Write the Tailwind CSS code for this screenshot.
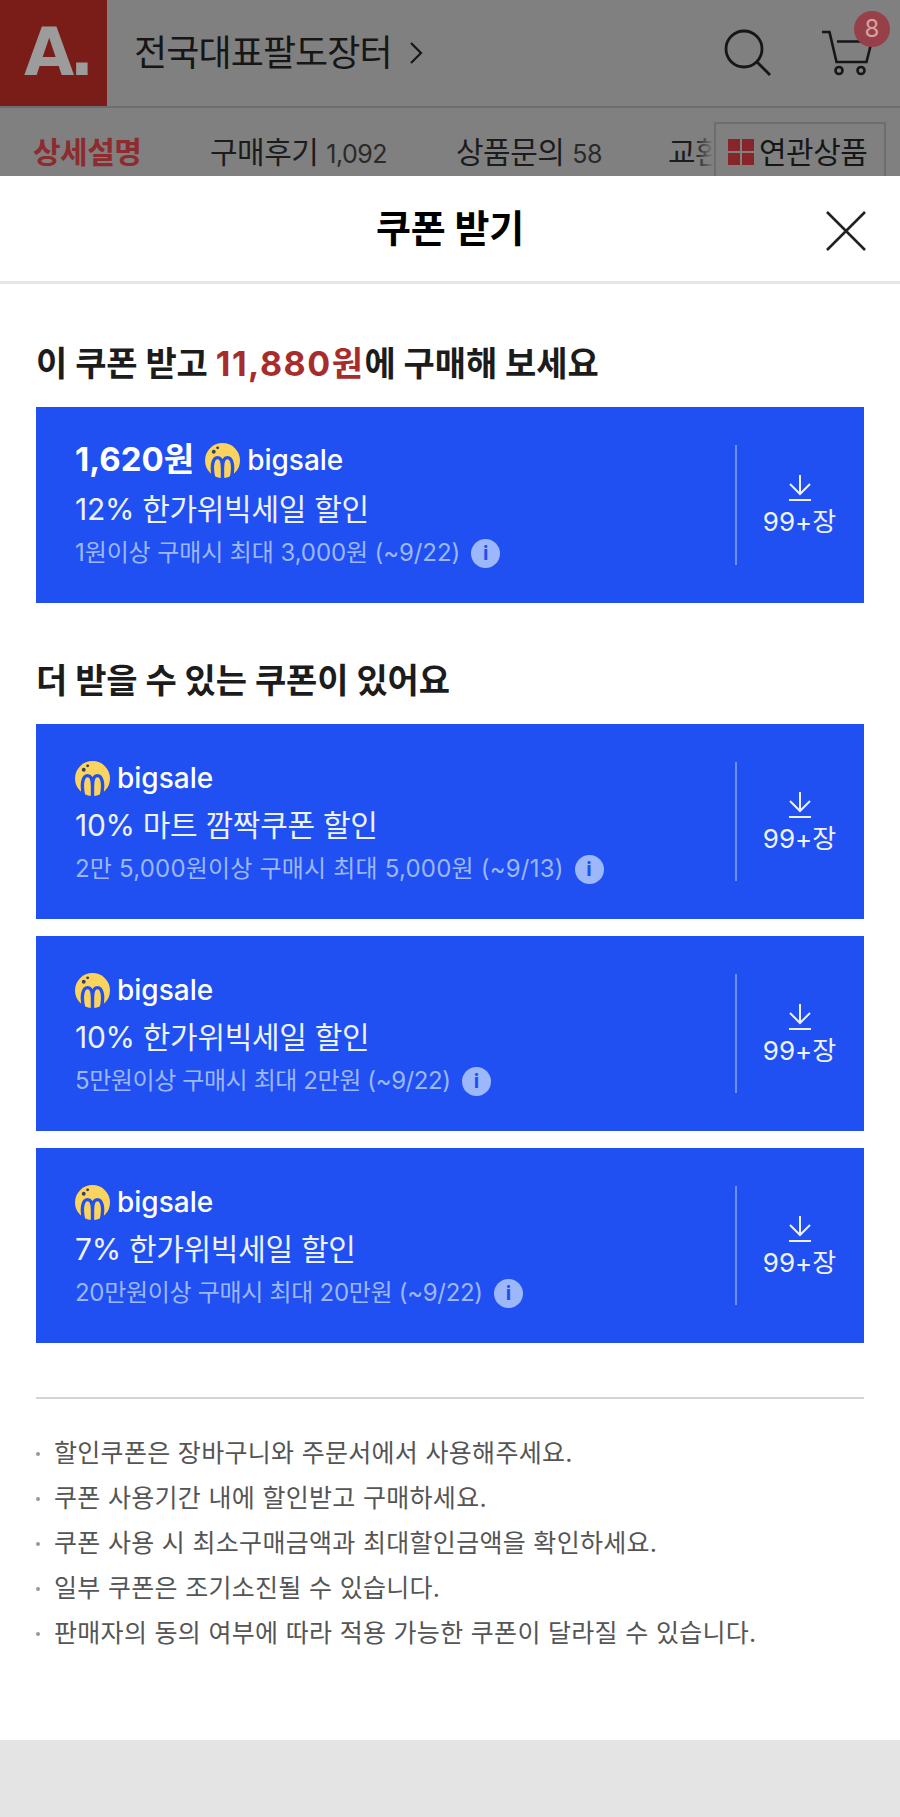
<!DOCTYPE html>
<html lang="ko">
<head>
<meta charset="UTF-8" />
<meta name="viewport" content="width=device-width, initial-scale=1.0" />
<title>쿠폰 받기</title>
<script src="https://cdn.jsdelivr.net/npm/@tailwindcss/browser@4"></script>
</head>
<body class="font-['Inter','Noto_Sans_CJK_KR',sans-serif] bg-white">
<div class="w-[900px] h-[1817px] overflow-hidden flex flex-col">

  <!-- dimmed page behind the sheet -->
  <header class="h-[108px] bg-[#808080] border-b-2 border-[#6e6e6e] flex items-center shrink-0">
    <div class="w-[107px] h-[106px] bg-[#7a1d18] flex items-center justify-center text-[#9c9c9c] font-['DejaVu_Sans'] font-bold text-[65px] tracking-[-6px] pl-[5px]">A.</div>
    <div class="ml-[27px] flex items-center gap-[17px] text-[36px] text-[#161616] tracking-[-0.9px]">
      전국대표팔도장터
      <svg class="w-[14px] h-[24px]" viewBox="0 0 14 24" fill="none" stroke="#161616" stroke-width="2.2"><path d="M2 2l10 10L2 22" /></svg>
    </div>
    <svg class="ml-auto w-[48px] h-[48px]" viewBox="0 0 48 48" fill="none" stroke="#161616" stroke-width="2.8"><circle cx="20" cy="20" r="18" /><path d="M33 33l13 13" /></svg>
    <div class="relative w-[50px] h-[46px] ml-[50px] mr-[28px]">
      <svg class="w-[50px] h-[46px]" viewBox="0 0 50 46" fill="none" stroke="#161616" stroke-width="2.6"><path d="M0 2h7.5l7 30h30l5-20M15 11.5h30" /><circle cx="17" cy="40.5" r="3.5" /><circle cx="39" cy="40.5" r="3.5" /></svg>
      <span class="absolute -top-[19px] left-[32px] w-[36px] h-[36px] rounded-full bg-[#97404a] text-[#d8a0a0] text-[24px] flex items-center justify-center">8</span>
    </div>
  </header>

  <nav class="relative h-[68px] bg-[#808080] shrink-0 overflow-hidden flex items-center pl-[33px] pt-[20px] text-[#1c1c1c] text-[30px] tracking-[-0.5px]">
    <span class="w-[177px] font-bold text-[#8d2b2e]">상세설명</span>
    <span class="w-[246px]">구매후기 <span class="text-[25px] text-[#2a2a2a]">1,092</span></span>
    <span class="w-[212px]">상품문의 <span class="text-[25px] text-[#2a2a2a]">58</span></span>
    <span>교환</span>
    <div class="absolute right-[186px] top-0 w-[20px] h-full bg-linear-to-r from-[#808080]/0 to-[#808080]"></div>
    <div class="absolute right-[14px] top-[14px] w-[172px] h-[60px] bg-[#808080] border-2 border-[#6e6e6e] flex items-center pl-[12px] gap-[5px] text-[#161616] text-[30px] tracking-[-0.5px]">
      <span class="grid grid-cols-2 gap-[2px] w-[26px] h-[26px] shrink-0">
        <i class="bg-[#86252a]"></i><i class="bg-[#86252a]"></i><i class="bg-[#86252a]"></i><i class="bg-[#86252a]"></i>
      </span>
      연관상품
    </div>
  </nav>

  <!-- coupon sheet -->
  <main class="flex-1 bg-white flex flex-col">
    <div class="relative h-[108px] border-b-[3px] border-[#e6e6e6] flex items-center justify-center shrink-0">
      <h1 class="text-[38px] font-bold text-black tracking-[-0.2px]">쿠폰 받기</h1>
      <svg class="absolute right-[34px] top-[35px] w-[40px] h-[40px]" viewBox="0 0 40 40" fill="none" stroke="#222222" stroke-width="2.6"><path d="M1 1l38 38M39 1L1 39" /></svg>
    </div>

    <section class="px-[36px]">
      <h2 class="mt-[60px] h-[40px] leading-[40px] text-[34px] font-bold text-[#1c1c1c] tracking-[-0.1px]">이 쿠폰 받고 <span class="text-[#a92c2c] tracking-[1.5px]">11,880원</span>에 구매해 보세요</h2>

      <article class="mt-[23px] h-[196px] bg-[#2050f2] flex text-white">
        <div class="flex-1 pl-[39px] pt-[32px]">
          <div class="flex items-center h-[42px]">
            <span class="text-[33px] font-bold mr-[11px]">1,620원</span>
            <svg class="w-[35px] h-[35px]" viewBox="0 0 36 36"><circle cx="18" cy="18" r="18" fill="#fbd35f" /><path d="M9 36C6 24 8 15 13 15c4 0 5 5 5 11 0-6 1-11 5-11 5 0 7 9 4 21M18 26v10" fill="none" stroke="#2050f2" stroke-width="3.5" /><circle cx="13" cy="5" r="1.5" fill="#3a3a5a" /><circle cx="9" cy="9" r="2" fill="#3a3a5a" /></svg>
            <span class="ml-[7px] text-[28px] font-medium">bigsale</span>
          </div>
          <p class="mt-[8px] h-[40px] leading-[40px] text-[30px] text-[#eef2ff] tracking-[-0.3px]">12% 한가위빅세일 할인</p>
          <p class="mt-[6px] flex items-center text-[24px] text-[#9db7fb] tracking-[-0.1px]">1원이상 구매시 최대 3,000원 (~9/22)<span class="ml-[11px] w-[29px] h-[29px] rounded-full bg-[#9db7fb] text-[#2050f2] text-[20px] font-bold flex items-center justify-center">i</span></p>
        </div>
        <div class="w-[129px] my-[38px] pt-[6px] pr-[2px] border-l-2 border-[#6b8ff8] flex flex-col items-center justify-center">
          <svg class="w-[24px] h-[26px]" viewBox="0 0 24 26" fill="none" stroke="#eef2ff" stroke-width="2"><path d="M12 0v19M2 9l10 10L22 9M1 25h22" /></svg>
          <span class="mt-[1px] text-[26px] text-[#eef2ff]">99+장</span>
        </div>
      </article>

      <h2 class="mt-[58px] h-[40px] leading-[40px] text-[34px] font-bold text-[#1c1c1c] tracking-[-0.1px]">더 받을 수 있는 쿠폰이 있어요</h2>

      <article class="mt-[23px] h-[195px] bg-[#2050f2] flex text-white">
        <div class="flex-1 pl-[39px] pt-[34px]">
          <div class="flex items-center h-[40px]">
            <svg class="w-[35px] h-[35px]" viewBox="0 0 36 36"><circle cx="18" cy="18" r="18" fill="#fbd35f" /><path d="M9 36C6 24 8 15 13 15c4 0 5 5 5 11 0-6 1-11 5-11 5 0 7 9 4 21M18 26v10" fill="none" stroke="#2050f2" stroke-width="3.5" /><circle cx="13" cy="5" r="1.5" fill="#3a3a5a" /><circle cx="9" cy="9" r="2" fill="#3a3a5a" /></svg>
            <span class="ml-[7px] text-[28px] font-medium">bigsale</span>
          </div>
          <p class="mt-[7px] h-[40px] leading-[40px] text-[30px] text-[#eef2ff] tracking-[-0.3px]">10% 마트 깜짝쿠폰 할인</p>
          <p class="mt-[6px] flex items-center text-[24px] text-[#9db7fb] tracking-[0.2px]">2만 5,000원이상 구매시 최대 5,000원 (~9/13)<span class="ml-[11px] w-[29px] h-[29px] rounded-full bg-[#9db7fb] text-[#2050f2] text-[20px] font-bold flex items-center justify-center">i</span></p>
        </div>
        <div class="w-[129px] my-[38px] pt-[6px] pr-[2px] border-l-2 border-[#6b8ff8] flex flex-col items-center justify-center">
          <svg class="w-[24px] h-[26px]" viewBox="0 0 24 26" fill="none" stroke="#eef2ff" stroke-width="2"><path d="M12 0v19M2 9l10 10L22 9M1 25h22" /></svg>
          <span class="mt-[1px] text-[26px] text-[#eef2ff]">99+장</span>
        </div>
      </article>

      <article class="mt-[17px] h-[195px] bg-[#2050f2] flex text-white">
        <div class="flex-1 pl-[39px] pt-[34px]">
          <div class="flex items-center h-[40px]">
            <svg class="w-[35px] h-[35px]" viewBox="0 0 36 36"><circle cx="18" cy="18" r="18" fill="#fbd35f" /><path d="M9 36C6 24 8 15 13 15c4 0 5 5 5 11 0-6 1-11 5-11 5 0 7 9 4 21M18 26v10" fill="none" stroke="#2050f2" stroke-width="3.5" /><circle cx="13" cy="5" r="1.5" fill="#3a3a5a" /><circle cx="9" cy="9" r="2" fill="#3a3a5a" /></svg>
            <span class="ml-[7px] text-[28px] font-medium">bigsale</span>
          </div>
          <p class="mt-[7px] h-[40px] leading-[40px] text-[30px] text-[#eef2ff] tracking-[-0.3px]">10% 한가위빅세일 할인</p>
          <p class="mt-[6px] flex items-center text-[24px] text-[#9db7fb] tracking-[-0.4px]">5만원이상 구매시 최대 2만원 (~9/22)<span class="ml-[11px] w-[29px] h-[29px] rounded-full bg-[#9db7fb] text-[#2050f2] text-[20px] font-bold flex items-center justify-center">i</span></p>
        </div>
        <div class="w-[129px] my-[38px] pt-[6px] pr-[2px] border-l-2 border-[#6b8ff8] flex flex-col items-center justify-center">
          <svg class="w-[24px] h-[26px]" viewBox="0 0 24 26" fill="none" stroke="#eef2ff" stroke-width="2"><path d="M12 0v19M2 9l10 10L22 9M1 25h22" /></svg>
          <span class="mt-[1px] text-[26px] text-[#eef2ff]">99+장</span>
        </div>
      </article>

      <article class="mt-[17px] h-[195px] bg-[#2050f2] flex text-white">
        <div class="flex-1 pl-[39px] pt-[34px]">
          <div class="flex items-center h-[40px]">
            <svg class="w-[35px] h-[35px]" viewBox="0 0 36 36"><circle cx="18" cy="18" r="18" fill="#fbd35f" /><path d="M9 36C6 24 8 15 13 15c4 0 5 5 5 11 0-6 1-11 5-11 5 0 7 9 4 21M18 26v10" fill="none" stroke="#2050f2" stroke-width="3.5" /><circle cx="13" cy="5" r="1.5" fill="#3a3a5a" /><circle cx="9" cy="9" r="2" fill="#3a3a5a" /></svg>
            <span class="ml-[7px] text-[28px] font-medium">bigsale</span>
          </div>
          <p class="mt-[7px] h-[40px] leading-[40px] text-[30px] text-[#eef2ff] tracking-[-0.3px]">7% 한가위빅세일 할인</p>
          <p class="mt-[6px] flex items-center text-[24px] text-[#9db7fb] tracking-[-0.3px]">20만원이상 구매시 최대 20만원 (~9/22)<span class="ml-[11px] w-[29px] h-[29px] rounded-full bg-[#9db7fb] text-[#2050f2] text-[20px] font-bold flex items-center justify-center">i</span></p>
        </div>
        <div class="w-[129px] my-[38px] pt-[6px] pr-[2px] border-l-2 border-[#6b8ff8] flex flex-col items-center justify-center">
          <svg class="w-[24px] h-[26px]" viewBox="0 0 24 26" fill="none" stroke="#eef2ff" stroke-width="2"><path d="M12 0v19M2 9l10 10L22 9M1 25h22" /></svg>
          <span class="mt-[1px] text-[26px] text-[#eef2ff]">99+장</span>
        </div>
      </article>

      <ul class="mt-[54px] pt-[32px] border-t-2 border-[#d4d4d4] text-[25px] text-[#555555] tracking-[0.3px] leading-[45px]">
        <li class="flex items-center"><i class="w-[4px] h-[4px] rounded-full bg-[#999999] mr-[14px]"></i>할인쿠폰은 장바구니와 주문서에서 사용해주세요.</li>
        <li class="flex items-center"><i class="w-[4px] h-[4px] rounded-full bg-[#999999] mr-[14px]"></i>쿠폰 사용기간 내에 할인받고 구매하세요.</li>
        <li class="flex items-center"><i class="w-[4px] h-[4px] rounded-full bg-[#999999] mr-[14px]"></i>쿠폰 사용 시 최소구매금액과 최대할인금액을 확인하세요.</li>
        <li class="flex items-center"><i class="w-[4px] h-[4px] rounded-full bg-[#999999] mr-[14px]"></i>일부 쿠폰은 조기소진될 수 있습니다.</li>
        <li class="flex items-center"><i class="w-[4px] h-[4px] rounded-full bg-[#999999] mr-[14px]"></i>판매자의 동의 여부에 따라 적용 가능한 쿠폰이 달라질 수 있습니다.</li>
      </ul>
    </section>
  </main>

  <footer class="h-[77px] bg-[#e4e4e4] shrink-0"></footer>
</div>
</body>
</html>
